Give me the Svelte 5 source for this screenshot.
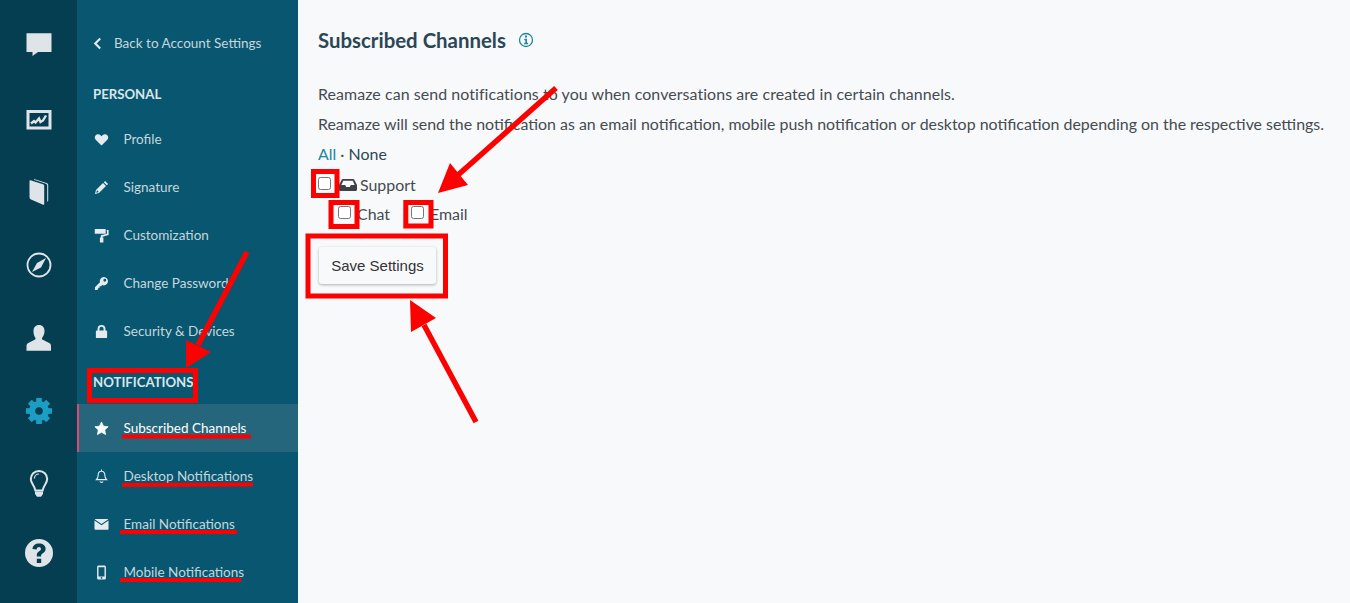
<script>
  const rail = ['chat', 'chart', 'book', 'compass', 'user', 'gear', 'bulb', 'help'];
  const teeth = [0, 45, 90, 135, 180, 225, 270, 315];
  const personal = [
    { label: 'Profile', icon: 'heart' },
    { label: 'Signature', icon: 'pencil' },
    { label: 'Customization', icon: 'roller' },
    { label: 'Change Password', icon: 'key' },
    { label: 'Security & Devices', icon: 'lock' }
  ];
  const notifications = [
    { label: 'Subscribed Channels', icon: 'star', active: true },
    { label: 'Desktop Notifications', icon: 'bell' },
    { label: 'Email Notifications', icon: 'mail' },
    { label: 'Mobile Notifications', icon: 'phone' }
  ];
</script>

{#snippet navIcon(name)}
  <svg class="nav-icon" viewBox="0 0 16 16" aria-hidden="true">
    {#if name === 'heart'}
      <path fill="currentColor" d="M8 14.500 1.800 8.300C.2 6.600.6 3.600 2.900 2.700c1.900-.8 3.700 0 5.100 1.800 1.400-1.800 3.200-2.600 5.100-1.800 2.300.9 2.700 3.900 1.100 5.600z"/>
    {:else if name === 'pencil'}
      <path fill="currentColor" d="M11.800 1 15 4.200 13.600 5.600 10.400 2.400zM9.600 3.200 12.800 6.400 5.300 13.900 1 15l1.100-4.300zM3.200 10.800l-.8 2.800 2.800-.8z"/>
    {:else if name === 'roller'}
      <path fill="currentColor" d="M.8 1h11.700v5.200H.8zM13.500 2.200h2.100v5.300L9 9.200V10h1v5.500H6.300V10h1V7.800l6.500-1.600V3.400h-.3z"/>
    {:else if name === 'key'}
      <path fill="currentColor" fill-rule="evenodd" d="M10.500 1a4.500 4.500 0 1 1-1.700 8.700L7.500 11H6v1.500H4.500V14L3 15H1v-3l5.300-5.300A4.500 4.500 0 0 1 10.500 1zm1 2a1.500 1.500 0 1 0 0 3 1.500 1.500 0 0 0 0-3z"/>
    {:else if name === 'lock'}
      <path fill="currentColor" fill-rule="evenodd" d="M8 1a4.200 4.200 0 0 1 4.200 4.200V7h.8c.6 0 1 .4 1 1v6c0 .6-.4 1-1 1H3c-.6 0-1-.4-1-1V8c0-.6.4-1 1-1h.8V5.200A4.200 4.200 0 0 1 8 1zm0 2a2.200 2.200 0 0 0-2.200 2.200V7h4.400V5.200A2.200 2.200 0 0 0 8 3z"/>
    {:else if name === 'star'}
      <path fill="currentColor" stroke="currentColor" stroke-width=".8" stroke-linejoin="round" d="m8 1 2.100 4.500 5 .6-3.700 3.400 1 5L8 12l-4.400 2.500 1-5L.9 6.100l5-.6z"/>
    {:else if name === 'bell'}
      <path fill="none" stroke="currentColor" stroke-width="1.200" d="M8 2.400c-2.400 0-3.500 1.700-3.500 3.800 0 2.600-.7 3.900-1.900 5.100h10.800c-1.200-1.200-1.900-2.500-1.900-5.100 0-2.100-1.100-3.800-3.500-3.800zM8 .6v1.800M6.300 13.200c.3.700 1 1.100 1.700 1.100s1.400-.4 1.700-1.100"/>
    {:else if name === 'mail'}
      <path fill="currentColor" d="M1.600 2h12.800c.5 0 .8.200 1 .5L8 7.500.6 2.500c.2-.3.500-.5 1-.5zM.5 3.600 8 8.700l7.500-5.100v9c0 .7-.4 1.100-1.100 1.100H1.600c-.7 0-1.100-.4-1.100-1.100z"/>
    {:else}
      <path fill="currentColor" fill-rule="evenodd" d="M5 .5h6c1 0 1.700.7 1.700 1.700v11.600c0 1-.7 1.700-1.700 1.700H5c-1 0-1.700-.7-1.700-1.700V2.200C3.300 1.200 4 .5 5 .5zM4.800 2.500v9.700h6.400V2.500zM8 12.900a.9.900 0 1 0 0 1.800.9.900 0 0 0 0-1.800z"/>
    {/if}
  </svg>
{/snippet}

{#snippet railIcon(name)}
  <svg class="rail-icon" class:gear={name === 'gear'} viewBox="0 0 28 28" aria-hidden="true">
    {#if name === 'chat'}
      <path fill="currentColor" d="M1.500 2.300h25V21H13l-5.500 4v-4h-6z"/>
    {:else if name === 'chart'}
      <path fill="currentColor" fill-rule="evenodd" d="M1.500 6h25v19.500h-25zM4.500 9v13.500h19V9z"/>
      <path fill="none" stroke="currentColor" stroke-width="2.400" d="M6 19.500l3-2.500 1.500 1.500 3.500-4 1.500 3.500 2.500-1.500 3-5"/>
    {:else if name === 'book'}
      <path fill="currentColor" d="M5.500 3.200 18 7.200c.8.300 1.200.8 1.200 1.600V27c0 .7-.4 1-1 .7L6 22.500c-1-.4-1.500-1.200-1.500-2.200V4c0-.6.400-.9 1-.8z"/>
      <path fill="currentColor" d="M9 2 21.500 6c1 .3 1.700 1 1.700 2v15.500c0 .6-.4 1.100-1 1.300V8.500c0-1-.5-1.500-1.300-1.800L9 2.800z"/>
    {:else if name === 'compass'}
      <circle cx="14" cy="15" r="11.500" fill="none" stroke="currentColor" stroke-width="1.800"/>
      <path fill="currentColor" d="M21 8 16 17.500 7 22l5-9z"/>
    {:else if name === 'user'}
      <path fill="currentColor" d="M14 2c3.500 0 5.500 2.500 5.500 6 0 2.700-1 5-2.200 6.400-.7.900-.4 1.900.6 2.400l6.300 3.300c1.300.7 1.800 1.700 1.800 3.400v4.200H1.500v-4.200c0-1.700.5-2.700 1.800-3.400l6.300-3.300c1-.5 1.300-1.500.6-2.400C9 13 8.500 10.700 8.500 8c0-3.500 2-6 5.500-6z"/>
    {:else if name === 'gear'}
      <circle cx="14" cy="15" r="6.900" fill="none" stroke="currentColor" stroke-width="6.200"/>
      {#each teeth as angle}
        <rect x="11.200" y="2" width="5.600" height="5" fill="currentColor" transform="rotate({angle} 14 15)"/>
      {/each}
    {:else if name === 'bulb'}
      <path fill="none" stroke="currentColor" stroke-width="2" d="M14 2c-4.600 0-8.200 3.300-8.200 8 0 4.200 3.600 6.200 4.600 11.500h7.200c1-5.300 4.600-7.300 4.600-11.500 0-4.700-3.600-8-8.200-8z"/>
      <path fill="none" stroke="currentColor" stroke-width="1.200" d="M14 5c-2.700 0-4.600 2-4.600 4.500"/>
      <path fill="currentColor" d="M10 22.500h8V25l-2 2.700h-4L10 25z"/>
    {:else}
      <path fill="currentColor" fill-rule="evenodd" transform="translate(0 -3)" d="M14 0a14 14 0 1 1 0 28A14 14 0 0 1 14 0zm-2.200 19.800v4.300h4.400v-4.300zM14 4.500c-3.700 0-6.200 1.900-6.500 5.400l4.200.6c.2-1.600 1-2.400 2.200-2.400 1.200 0 2 .7 2 1.800 0 1-.5 1.500-1.800 2.400-1.800 1.200-2.300 2.300-2.300 4.200v1h4.300v-.6c0-1 .3-1.500 1.500-2.300 1.900-1.300 3-2.500 3-4.800 0-3.300-2.700-5.300-6.600-5.300z"/>
    {/if}
  </svg>
{/snippet}

<div class="page">
  <aside class="rail">
    {#each rail as item}
      <div class="rail-item">{@render railIcon(item)}</div>
    {/each}
  </aside>

  <nav class="nav">
    <a class="back" href="#back">
      <svg class="chevron" viewBox="0 0 10 14" aria-hidden="true"><path d="M8 1.500 2.500 7 8 12.500" fill="none" stroke="currentColor" stroke-width="2.400"/></svg>
      Back to Account Settings
    </a>
    <h3 class="heading first">PERSONAL</h3>
    {#each personal as item}
      <a class="item" href="#item">{@render navIcon(item.icon)}<span>{item.label}</span></a>
    {/each}
    <h3 class="heading second">NOTIFICATIONS</h3>
    {#each notifications as item}
      <a class="item" class:active={item.active} href="#item">{@render navIcon(item.icon)}<span>{item.label}</span></a>
    {/each}
  </nav>

  <main class="main">
    <div class="title">
      <h1>Subscribed Channels</h1>
      <svg class="info" viewBox="0 0 16 16" aria-hidden="true">
        <circle cx="8" cy="8" r="6.500" fill="none" stroke="currentColor" stroke-width="1.300"/>
        <path fill="currentColor" d="M7 3.500h2v2H7zM6.300 6.800H9v4h1v1.400H6.200v-1.400h1.100V8.200h-1z"/>
      </svg>
    </div>
    <p class="line one">Reamaze can send notifications to you when conversations are created in certain channels.</p>
    <p class="line two">Reamaze will send the notification as an email notification, mobile push notification or desktop notification depending on the respective settings.</p>
    <p class="line pick"><a href="#all">All</a> · <span class="none">None</span></p>
    <div class="support">
      <input type="checkbox" />
      <svg class="inbox" viewBox="0 0 18 14" aria-hidden="true">
        <path fill="currentColor" fill-rule="evenodd" d="M4 1h10c.6 0 1 .3 1.300.8L18 7v4.500c0 .8-.6 1.500-1.500 1.500h-15C.6 13 0 12.300 0 11.500V7l2.700-5.200C3 1.300 3.400 1 4 1zm.3 1.800L2.300 7h3.900l1 2h3.600l1-2h3.900l-2-4.200z"/>
      </svg>
      <span>Support</span>
    </div>
    <div class="subs">
      <label class="chat"><input type="checkbox" />Chat</label>
      <label class="email"><input type="checkbox" />Email</label>
    </div>
    <button class="save" type="button">Save Settings</button>
  </main>

  <svg class="marks" viewBox="0 0 1350 603" aria-hidden="true">
    <g fill="none" stroke="#fe0000" stroke-width="5">
      <rect x="313.500" y="171.500" width="23.500" height="24"/>
      <rect x="331" y="202.500" width="26" height="24"/>
      <rect x="405.800" y="202.500" width="25.200" height="23.500"/>
      <rect x="308" y="236" width="137.500" height="60"/>
      <rect x="89.500" y="370.500" width="106" height="30"/>
    </g>
    <g fill="none" stroke="#fe0000">
      <path stroke-width="5.500" d="M556 88 458 175M247 252 198 345M476 422 424 325"/>
      <path stroke-width="4" d="M122 436.500H251M122 485 253 484.500M120 532H237M120 580H241"/>
    </g>
    <g fill="#fe0000">
      <path d="M438 193 450 163 468 185zM186 368 186 340 211 352zM410 300 436 318 411 332z"/>
    </g>
  </svg>
</div>

<style>
  :global(body) {
    margin: 0;
    background: #f8f9fb;
  }

  .page {
    position: relative;
    display: flex;
    width: 1350px;
    height: 603px;
    overflow: hidden;
    font-family: Lato, "Liberation Sans", sans-serif;
  }

  .rail {
    flex: 0 0 77px;
    display: flex;
    flex-direction: column;
    padding-top: 8px;
    box-sizing: border-box;
    background: #053e50;
    color: #dfe4e8;
  }

  .rail-item {
    flex: 0 0 73px;
    display: flex;
    align-items: center;
    justify-content: center;
  }

  .rail-icon {
    width: 28px;
    height: 28px;
    overflow: visible;
  }

  .rail-icon.gear {
    color: #1c9ec4;
  }

  .nav {
    flex: 0 0 221px;
    display: flex;
    flex-direction: column;
    box-sizing: border-box;
    background: #08566f;
    color: #c5d6dd;
    font-size: 13.500px;
  }

  .nav a {
    color: inherit;
    text-decoration: none;
  }

  .back {
    display: flex;
    align-items: center;
    gap: 12px;
    height: 30px;
    margin-top: 28px;
    padding-left: 16px;
  }

  .chevron {
    width: 9px;
    height: 13px;
    color: #e0e8ec;
  }

  .heading {
    margin: 0;
    padding-left: 16px;
    color: #dbe5ea;
    font-size: 13.200px;
    font-weight: 700;
    line-height: 20px;
  }

  .heading.first {
    margin-top: 26px;
    margin-bottom: 11px;
  }

  .heading.second {
    margin-top: 17px;
    margin-bottom: 12px;
  }

  .item {
    display: flex;
    align-items: center;
    gap: 14.500px;
    height: 48px;
    box-sizing: border-box;
    padding-left: 17px;
  }

  .item.active {
    padding-left: 15px;
    border-left: 2px solid #e0496f;
    background: #25667c;
    color: #fff;
  }

  .nav-icon {
    flex: none;
    width: 15px;
    height: 15px;
    color: #e4ecef;
  }

  .item.active .nav-icon {
    color: #fff;
  }

  .main {
    flex: 1;
    box-sizing: border-box;
    padding-left: 20px;
    color: #444b50;
    font-size: 15.930px;
  }

  .title {
    display: flex;
    align-items: center;
    gap: 12px;
    height: 28px;
    margin-top: 26px;
    color: #2b4655;
  }

  h1 {
    margin: 0;
    font-size: 20.400px;
    font-weight: 700;
    line-height: 28px;
  }

  .info {
    width: 16px;
    height: 16px;
    color: #21879f;
  }

  .line {
    margin: 0;
    height: 30px;
    line-height: 30px;
    white-space: nowrap;
  }

  .line.one {
    margin-top: 25px;
    letter-spacing: 0.08px;
  }

  .pick a {
    color: #21879f;
    text-decoration: none;
  }

  .none {
    color: #2b4655;
  }

  input {
    width: 13px;
    height: 13px;
    margin: 0 0 3px;
  }

  .support {
    display: flex;
    align-items: center;
    height: 29px;
    margin-top: 1px;
  }

  .inbox {
    width: 18px;
    height: 14px;
    margin: 0 3px 0 8px;
    color: #3c4246;
  }

  .subs {
    display: flex;
    align-items: center;
    height: 29px;
    padding-left: 20px;
  }

  .subs label {
    display: flex;
    align-items: center;
    gap: 6px;
  }

  .subs .email {
    margin-left: 21px;
    gap: 6px;
  }

  .save {
    display: block;
    width: 117px;
    height: 37px;
    margin-top: 19px;
    margin-left: 1px;
    padding: 0;
    border: 0;
    border-radius: 3px;
    background: #f8f9fb;
    box-shadow: 0 1px 3px rgba(0, 0, 0, 0.3);
    color: #333;
    font-family: "Liberation Sans", sans-serif;
    font-size: 15px;
  }

  .marks {
    position: absolute;
    inset: 0;
    width: 1350px;
    height: 603px;
    pointer-events: none;
  }
</style>
